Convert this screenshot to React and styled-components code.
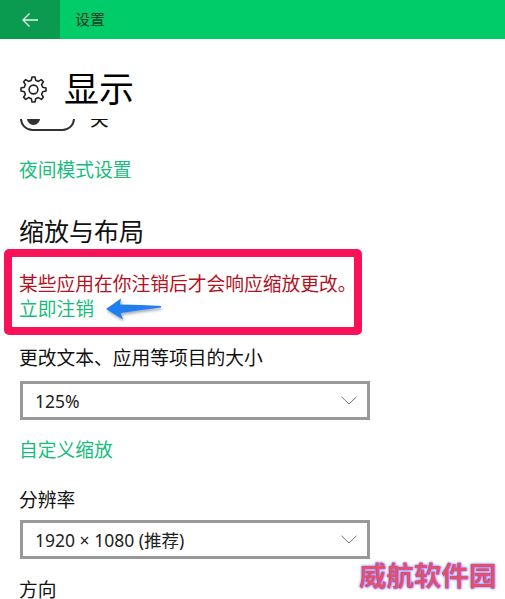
import React from 'react'
import styled, { createGlobalStyle } from 'styled-components'

const GlobalStyle = createGlobalStyle`
  html, body {
    margin: 0;
    padding: 0;
    background: #fff;
  }

  body {
    font-family: "Noto Sans", "Noto Sans CJK SC", sans-serif;
    color: #111;
  }
`

const Page = styled.div`
  position: relative;
  width: 505px;
  height: 599px;
  overflow: hidden;
  background: #fff;
`

const TopBar = styled.header`
  display: flex;
  align-items: center;
  height: 39px;
  background: #00cc6a;
`

const BackButton = styled.button`
  display: flex;
  align-items: center;
  justify-content: center;
  width: 60px;
  height: 39px;
  padding: 0;
  border: 0;
  background: #0a9a50;
`

const TopTitle = styled.span`
  margin-left: 15px;
  font-size: 15px;
  line-height: 39px;
  color: #0c3d22;
`

const TitleRow = styled.div`
  box-sizing: border-box;
  display: flex;
  align-items: center;
  gap: 17px;
  height: 80px;
  padding: 20px 0 0 20px;
`

const PageTitle = styled.h1`
  margin: 0;
  font-size: 35px;
  font-weight: 400;
  line-height: 46px;
  color: #000;
`

const Content = styled.main`
  height: 480px;
  overflow: hidden;
  padding-left: 20px;
`

const ToggleRow = styled.div`
  display: flex;
  align-items: center;
  gap: 15px;
  height: 25px;
  margin-top: -13px;
`

const Toggle = styled.div`
  position: relative;
  box-sizing: border-box;
  width: 55px;
  height: 25px;
  border: 2px solid #333;
  border-radius: 13px;
`

const Knob = styled.span`
  position: absolute;
  top: 4px;
  left: 5px;
  width: 13px;
  height: 13px;
  border-radius: 50%;
  background: #333;
`

const ToggleLabel = styled.span`
  font-size: 18.75px;
  line-height: 25px;
`

const Link = styled.a`
  display: block;
  margin-top: ${p => p.$top || 0}px;
  margin-left: -1px;
  font-size: 18.75px;
  line-height: 26px;
  color: #17bd7c;
`

const Heading = styled.h2`
  margin: 30px 0 0 -1px;
  font-size: 25px;
  font-weight: 400;
  line-height: 36px;
  color: #111;
`

const Notice = styled.section`
  box-sizing: border-box;
  width: 358px;
  height: 86px;
  margin: 0 0 0 -16px;
  padding: 14px 0 0 7px;
  border: 8px solid #fb1158;
  border-radius: 5px;
  white-space: nowrap;
`

const NoticeText = styled.p`
  margin: 0;
  font-size: 18.75px;
  line-height: 26px;
  color: #b3121f;
`

const NoticeLinkRow = styled.div`
  display: flex;
  align-items: center;
  gap: 12px;
  height: 24px;
`

const NoticeLink = styled.a`
  font-size: 18.75px;
  line-height: 24px;
  color: #17bd7c;
`

const FieldLabel = styled.div`
  margin-top: ${p => p.$top}px;
  margin-left: -1px;
  font-size: 18.75px;
  line-height: 26px;
  color: #111;
`

const Select = styled.div`
  box-sizing: border-box;
  display: flex;
  align-items: center;
  justify-content: space-between;
  width: 350px;
  height: 39px;
  margin-top: ${p => p.$top || 0}px;
  padding: 0 10px 0 12px;
  border: 3px solid #999;
  font-size: 17.5px;
  color: #222;
`

const Watermark = styled.div`
  position: absolute;
  left: 359px;
  top: 560px;
  font-family: "Noto Sans CJK SC", sans-serif;
  font-size: 27.5px;
  font-weight: 700;
  line-height: 28px;
  white-space: nowrap;
  color: #e2506f;
  text-shadow: 0 0 2px #7a78ff, 0 0 3px #9a90ff;
`

// win10 style outline gear, teeth computed around a circle
const gearPath = () => {
  const teeth = 8
  const points = []
  for (let i = 0; i < teeth; i++) {
    const a = (i / teeth) * Math.PI * 2
    const step = (Math.PI * 2) / teeth
    const pt = (r, t) => `${(12 + r * Math.cos(t)).toFixed(2)} ${(12 + r * Math.sin(t)).toFixed(2)}`
    points.push(`${i === 0 ? 'M' : 'L'}${pt(8.4, a - step * 0.3)}`)
    points.push(`L${pt(11.2, a - step * 0.15)}`)
    points.push(`L${pt(11.2, a + step * 0.15)}`)
    points.push(`L${pt(8.4, a + step * 0.3)}`)
  }
  return points.join(' ') + ' Z'
}

const GearIcon = () => (
  <svg width="27" height="27" viewBox="0 0 24 24" fill="none" stroke="#222" strokeWidth="1.4" strokeLinejoin="round">
    <path d={gearPath()} />
    <circle cx="12" cy="12" r="3.9" />
  </svg>
)

const BackIcon = () => (
  <svg width="18" height="16" viewBox="0 0 18 16" fill="none" stroke="#e4f5ea" strokeWidth="1.4">
    <path d="M17 8H2M8.5 1.5 2 8l6.5 6.5" />
  </svg>
)

const Chevron = () => (
  <svg width="16" height="9" viewBox="0 0 16 9" fill="none" stroke="#666" strokeWidth="0.9">
    <path d="M.5.8 8 8 15.5.8" />
  </svg>
)

const BlueArrow = () => (
  <svg width="56" height="24" viewBox="0 0 56 24" style={{ filter: 'drop-shadow(1px 2px 1.5px rgba(40,50,90,.45))' }}>
    <path d="M0 12 15 1.5 14 7.5 C28 8 42 8 55 9 L55 10.5 C42 12 28 14 14.5 16 L17 22.5Z" fill="#1f7ff0" />
  </svg>
)

const App = () => {
  return (
    <Page>
      <GlobalStyle />
      <TopBar>
        <BackButton type="button"><BackIcon /></BackButton>
        <TopTitle>设置</TopTitle>
      </TopBar>
      <TitleRow>
        <GearIcon />
        <PageTitle>显示</PageTitle>
      </TitleRow>
      <Content>
        <ToggleRow>
          <Toggle><Knob /></Toggle>
          <ToggleLabel>关</ToggleLabel>
        </ToggleRow>
        <Link $top={26}>夜间模式设置</Link>
        <Heading>缩放与布局</Heading>
        <Notice>
          <NoticeText>某些应用在你注销后才会响应缩放更改。</NoticeText>
          <NoticeLinkRow>
            <NoticeLink>立即注销</NoticeLink>
            <BlueArrow />
          </NoticeLinkRow>
        </Notice>
        <FieldLabel $top={10}>更改文本、应用等项目的大小</FieldLabel>
        <Select $top={10}>125%<Chevron /></Select>
        <Link $top={17}>自定义缩放</Link>
        <FieldLabel $top={24}>分辨率</FieldLabel>
        <Select $top={7}>1920 × 1080 (推荐)<Chevron /></Select>
        <FieldLabel $top={18}>方向</FieldLabel>
      </Content>
      <Watermark>威航软件园</Watermark>
    </Page>
  )
}

export default App
